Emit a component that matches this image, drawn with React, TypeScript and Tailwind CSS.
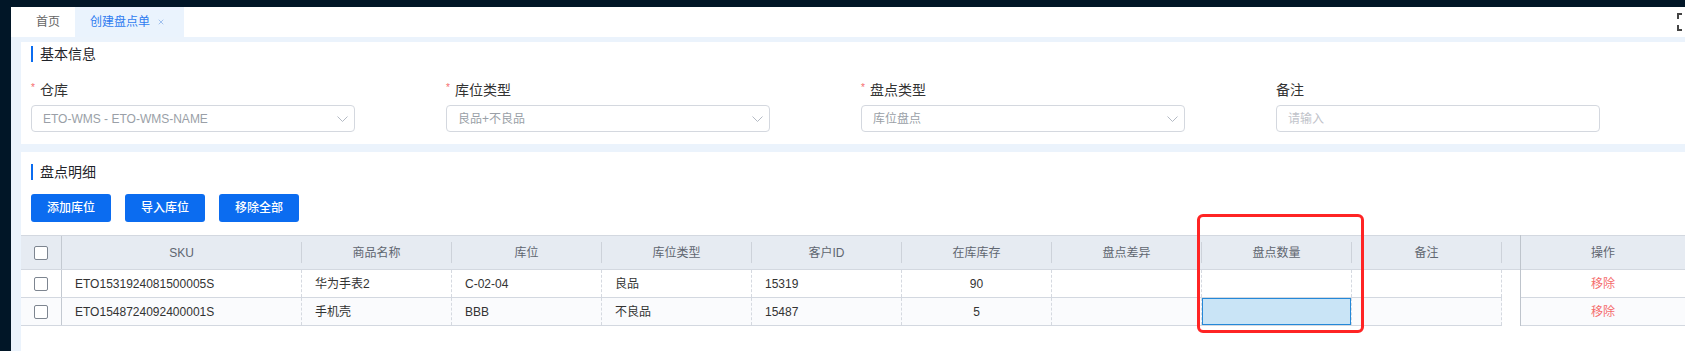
import { X } from "lucide-react";

const font = { fontFamily: '"Liberation Sans", "Noto Sans CJK SC", sans-serif' };

const formItems = [
  { label: "仓库", required: true, value: "ETO-WMS - ETO-WMS-NAME", select: true },
  { label: "库位类型", required: true, value: "良品+不良品", select: true },
  { label: "盘点类型", required: true, value: "库位盘点", select: true },
  { label: "备注", required: false, value: "请输入", select: false },
];

const columns = [
  { key: "sku", title: "SKU", width: "w-[240px]", center: false },
  { key: "name", title: "商品名称", width: "w-[150px]", center: false },
  { key: "loc", title: "库位", width: "w-[150px]", center: false },
  { key: "locType", title: "库位类型", width: "w-[150px]", center: false },
  { key: "customer", title: "客户ID", width: "w-[150px]", center: false },
  { key: "stock", title: "在库库存", width: "w-[150px]", center: true },
  { key: "diff", title: "盘点差异", width: "w-[150px]", center: false },
  { key: "count", title: "盘点数量", width: "w-[150px]", center: false },
  { key: "remark", title: "备注", width: "w-[150px]", center: false },
];

const rows: Record<string, string>[] = [
  { sku: "ETO1531924081500005S", name: "华为手表2", loc: "C-02-04", locType: "良品", customer: "15319", stock: "90", diff: "", count: "", remark: "" },
  { sku: "ETO1548724092400001S", name: "手机壳", loc: "BBB", locType: "不良品", customer: "15487", stock: "5", diff: "", count: "", remark: "" },
];

function Chevron() {
  return (
    <svg width="11" height="6" viewBox="0 0 11 6" fill="none">
      <polyline points="0.5,0.5 5.5,5.5 10.5,0.5" stroke="#b4bac4" strokeWidth="1" />
    </svg>
  );
}

function Checkbox() {
  return <div className="h-[14px] w-[14px] rounded-[2px] border border-[#7d8590] bg-white" />;
}

function SectionTitle({ text }: { text: string }) {
  return (
    <div className="flex h-4 items-center">
      <div className="h-4 w-[2px] bg-[#0b6cf0]" />
      <span className="ml-[7px] text-[14px] text-[#1f2329]">{text}</span>
    </div>
  );
}

export default function App() {
  return (
    <div className="flex h-[351px] w-[1685px] flex-col overflow-hidden bg-[#011627]" style={font}>
      <div className="h-[7px] shrink-0" />
      <div className="ml-[11px] flex flex-1 flex-col bg-[#ebf3fc]">
        {/* 标签栏 */}
        <div className="flex h-[30px] shrink-0 items-stretch bg-white pl-[10px]">
          <div className="flex w-[54px] items-center justify-center text-[12px] text-[#666]">首页</div>
          <div className="flex w-[109px] items-center bg-[#eaf3fd] pl-[15px] text-[12px] text-[#2f7cf0]">
            创建盘点单
            <X size={8} strokeWidth={2} className="ml-[7px] text-[#7aa6e6]" />
          </div>
          <div className="ml-auto mr-[-8px] flex items-center">
            <svg width="16" height="18" viewBox="0 0 16 18" fill="none">
              <path d="M1 6 V1 H5" stroke="#444" strokeWidth="2" />
              <path d="M1 12 V17 H5" stroke="#444" strokeWidth="2" />
              <path d="M11 1 H15 V6" stroke="#444" strokeWidth="2" />
              <path d="M11 17 H15 V12" stroke="#444" strokeWidth="2" />
            </svg>
          </div>
        </div>

        {/* 基本信息 */}
        <div className="ml-[10px] mt-[5px] bg-white pb-[12px] pl-[10px] pt-[4px]">
          <SectionTitle text="基本信息" />
          <div className="mt-[18px] grid grid-cols-[324px_324px_324px_324px] gap-x-[91px]">
            {formItems.map((item) => (
              <div key={item.label} className="flex flex-col">
                <div className="flex h-5 items-center text-[14px] text-[#333]">
                  {item.required ? (
                    <span className="mr-[5px] -mt-[6px] text-[10px] text-[#f56c6c]">*</span>
                  ) : null}
                  {item.label}
                </div>
                <div className="mt-[5px] flex h-[27px] items-center justify-between rounded-[4px] border border-[#d4d8df] bg-white pl-[11px] pr-[6px]">
                  <span className={`text-[12px] ${item.select ? "text-[#9a9fa7]" : "text-[#bfc3ca]"}`}>{item.value}</span>
                  {item.select ? <Chevron /> : null}
                </div>
              </div>
            ))}
          </div>
        </div>

        {/* 盘点明细 */}
        <div className="relative ml-[10px] mt-[8px] flex-1 bg-white pt-[12px]">
          <div className="pl-[10px]">
            <SectionTitle text="盘点明细" />
            <div className="mt-[14px] flex gap-[14px]">
              {["添加库位", "导入库位", "移除全部"].map((b) => (
                <button
                  key={b}
                  className="flex h-[28px] w-[80px] items-center justify-center rounded-[3px] bg-[#0b6cf0] text-[12px] font-medium text-white"
                >
                  {b}
                </button>
              ))}
            </div>
          </div>

          {/* 表格 */}
          <div className="mt-[13px] flex text-[12px]">
            <div className="flex w-[1481px] flex-col">
              <div className="flex h-[35px] border-y border-[#d3d8e0] bg-[#e6ebf2] text-[#5f6670]">
                <div className="flex w-[41px] items-center justify-center border-r border-[#c3c9d1]">
                  <Checkbox />
                </div>
                {columns.map((c) => (
                  <div key={c.key} className={`flex ${c.width} items-center`}>
                    <span className="flex-1 text-center">{c.title}</span>
                    <div className="h-[21px] w-px bg-[#cdd2da]" />
                  </div>
                ))}
              </div>
              {rows.map((r, i) => (
                <div
                  key={r.sku}
                  className={`flex h-[28px] border-b border-[#d3d8e0] text-[#333] ${i === 1 ? "bg-[#fafbfd]" : "bg-white"}`}
                >
                  <div className="flex w-[41px] items-center justify-center border-r border-[#c3c9d1]">
                    <Checkbox />
                  </div>
                  {columns.map((c) => {
                    const editing = c.key === "count" && i === 1;
                    return (
                      <div
                        key={c.key}
                        className={`flex ${c.width} items-center border-r border-dashed border-[#d5d9e0] ${c.center ? "justify-center" : editing ? "" : "pl-[13px]"}`}
                      >
                        {editing ? (
                          <div className="h-full w-full border border-[#2488d8] bg-[#c9e4f6]" />
                        ) : (
                          r[c.key]
                        )}
                      </div>
                    );
                  })}
                </div>
              ))}
            </div>
            <div className="flex w-[18px] flex-col">
              <div className="h-[35px] border-y border-[#d3d8e0] bg-[#e6ebf2]" />
            </div>
            <div className="flex flex-1 flex-col border-l border-[#bec4cc]">
              <div className="flex h-[35px] items-center justify-center border-y border-[#d3d8e0] bg-[#e6ebf2] text-[#5f6670]">
                操作
              </div>
              {rows.map((r, i) => (
                <div
                  key={r.sku}
                  className={`flex h-[28px] items-center justify-center border-b border-[#d3d8e0] text-[#f56c6c] ${i === 1 ? "bg-[#fafbfd]" : "bg-white"}`}
                >
                  移除
                </div>
              ))}
            </div>
          </div>

          {/* 标注框 */}
          <div className="pointer-events-none absolute left-[1176px] top-[62px] h-[119px] w-[167px] rounded-[6px] border-[3px] border-[#ff2424]" />
        </div>
      </div>
    </div>
  );
}
